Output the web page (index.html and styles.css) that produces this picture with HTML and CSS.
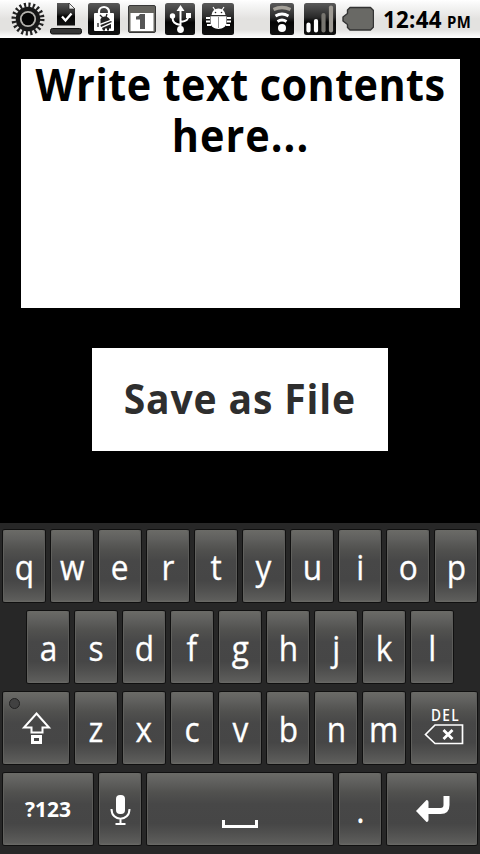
FILE: index.html
```
<!DOCTYPE html>
<html lang="en">
<head>
<meta charset="utf-8">
<title>Text editor</title>
<link rel="stylesheet" href="styles.css">
</head>
<body>
<header class="status">
  <svg class="status-icons" width="374" height="38" viewBox="0 0 374 38">
    <defs>
      <linearGradient id="tile" x2="0" y2="1"><stop offset="0" stop-color="#5a5a5a"/><stop offset=".45" stop-color="#292929"/><stop offset=".6" stop-color="#050505"/><stop offset="1" stop-color="#111"/></linearGradient>
    </defs>
    <circle cx="28" cy="19" r="14.2" fill="none" stroke="#222" stroke-width="4.6" stroke-dasharray="2.1 2.361"/>
    <circle cx="28" cy="19" r="10.2" fill="#b5b3ae" stroke="#171717" stroke-width="4.2"/>
    <circle cx="28" cy="19" r="6.3" fill="#050505"/>
    <path d="M57 3H69L75 9V25.5H57Z" fill="url(#tile)"/><path d="M69 3V9H75Z" fill="#eee" stroke="#222" stroke-width=".7"/>
    <path d="M62 16.5l3.500 4 6-7" fill="none" stroke="#fff" stroke-width="2.300"/>
    <rect x="50.500" y="28.500" width="31" height="5.500" rx="2" fill="#353535" stroke="#111"/>
    <rect x="88" y="3" width="32" height="32" rx="2.500" fill="url(#tile)"/>
    <path d="M99 15V11.500a5 4.500 0 0 1 10 0V15" fill="none" stroke="#fff" stroke-width="2.200"/>
    <rect x="94" y="13" width="20" height="18" rx="1" fill="#fff"/>
    <path d="M100.500 19q1.500-3 5-2.500t4.500 3.500l-9.500 3.500zM100.500 25l10.500-4 1 1-11 5zM102 28l9-4v4.500h-2v2h-2v-2h-2v2h-2z" fill="#222"/><path d="M100 15l3 3M107 14l-1 3M98 23v4" stroke="#222" stroke-width="1.300"/>
    <rect x="128.500" y="5.500" width="27" height="27" rx="1.500" fill="#65645f" stroke="#383838"/>
    <rect x="130.500" y="13" width="23" height="18" fill="#fff"/><path d="M140 14h5v15h-5V19.500h-4v-3q3 0 4-2.500z" fill="#555"/>
    <rect x="165" y="3" width="30" height="32" rx="2.500" fill="url(#tile)"/>
    <g fill="none" stroke="#fff" stroke-width="2"><path d="M180.500 8v21M180.500 25c-6-1-8-3-8-8M180.500 22c6-1 8-2 8-7"/></g>
    <path d="M180.500 5l4 6h-8zM186 13h5v5h-5z" fill="#fff"/><circle cx="172.500" cy="16" r="2.700" fill="#fff"/><circle cx="180.500" cy="29.500" r="3.400" fill="#fff"/>
    <rect x="202" y="3" width="32" height="32" rx="2.500" fill="url(#tile)"/>
    <path d="M213 7l2 3M224 7l-2 3" stroke="#fff" stroke-width="1.200"/>
    <path d="M211.500 15q1-6.500 7-6.500t7 6.500zM210.500 16.300h16v6.200c0 8.500-16 8.500-16 0z" fill="#fff"/>
    <path d="M206 18h4M206 21.500h4M207 25h4M227 18h4M227 21.500h4M226 25h4" stroke="#fff" stroke-width="2"/>
    <path d="M218.500 17v11" stroke="#777" stroke-width=".8"/><circle cx="215.500" cy="12.500" r=".8" fill="#222"/><circle cx="221.500" cy="12.500" r=".8" fill="#222"/>
    <rect x="270" y="3" width="24" height="32" rx="2.500" fill="url(#tile)"/>
    <path d="M273.500 9.500q8.500-4 17 0" fill="none" stroke="#a5a199" stroke-width="3.300"/>
    <g fill="none" stroke="#fff" stroke-width="2.800"><path d="M275.500 16q6.500-4 13 0"/><path d="M277.500 21.500q4.500-3 9 0"/></g><circle cx="282" cy="28" r="4" fill="#fff"/>
    <rect x="304" y="3" width="32" height="32" rx="2.500" fill="url(#tile)"/>
    <g stroke-width="4.200" stroke-linecap="round"><path d="M308.500 24.500v6M316 21v9.500" stroke="#fff"/><path d="M323.500 15v15.500" stroke="#77756f"/><path d="M331 7.500v23" stroke="#9e9a93"/></g>
    <path d="M350 7.500h20.500l3 3v16.500l-3 3h-20.500l-2.500-2.500v-3l-4.500-3.500v-4l4.500-3.500v-3.500z" fill="#696965" stroke="#333" stroke-width="1.400" stroke-linejoin="round"/>
  </svg>
  <div class="clock"><span class="time">12:44</span><span class="period">PM</span></div>
</header>
<main class="app">
  <div class="editor" contenteditable="true" spellcheck="false"><div class="line first">Write text contents</div><div class="line second">here...</div></div>
  <button class="save"><span>Save as File</span></button>
</main>
<section class="keyboard">
  <div class="row">
    <div class="key"><b>q</b></div><div class="key"><b>w</b></div><div class="key"><b>e</b></div><div class="key"><b>r</b></div><div class="key"><b>t</b></div><div class="key"><b>y</b></div><div class="key"><b>u</b></div><div class="key"><b>i</b></div><div class="key"><b>o</b></div><div class="key"><b>p</b></div>
  </div>
  <div class="row">
    <div class="key"><b>a</b></div><div class="key"><b>s</b></div><div class="key"><b>d</b></div><div class="key"><b>f</b></div><div class="key"><b>g</b></div><div class="key"><b>h</b></div><div class="key"><b>j</b></div><div class="key"><b>k</b></div><div class="key"><b>l</b></div>
  </div>
  <div class="row">
    <div class="key shift"><svg width="66" height="72" viewBox="0 0 66 72"><circle cx="11.500" cy="11.500" r="5" fill="#414141" stroke="#222"/><path d="M33.500 21.500L46 35.500H39.500V40.500H28.500V35.500H21Z" fill="none" stroke="#fff" stroke-width="2"/><path d="M29.500 44.500h8v6h-8z" fill="none" stroke="#fff" stroke-width="3"/></svg></div>
    <div class="key"><b>z</b></div><div class="key"><b>x</b></div><div class="key"><b>c</b></div><div class="key"><b>v</b></div><div class="key"><b>b</b></div><div class="key"><b>n</b></div><div class="key"><b>m</b></div>
    <div class="key del"><span>DEL</span><svg width="40" height="21" viewBox="0 0 40 21"><path d="M1.500 10.500L11 1h27.500v18.500H11Z" fill="none" stroke="#fff" stroke-width="1.700"/><path d="M19.500 6l9 9M28.500 6l-9 9" stroke="#fff" stroke-width="2.800"/></svg></div>
  </div>
  <div class="row">
    <div class="key symbols"><span>?123</span></div>
    <div class="key"><svg width="42" height="72" viewBox="0 0 42 72"><rect x="17" y="22" width="9" height="19" rx="4" fill="#fff"/><path d="M12.500 36c0 13 18 13 18 0M21.500 45v6M16.500 51h10" fill="none" stroke="#fff" stroke-width="2"/></svg></div>
    <div class="key space"><svg width="186" height="72" viewBox="0 0 186 72"><path d="M76.500 47v6.500h33V47" fill="none" stroke="#fff" stroke-width="3"/></svg></div>
    <div class="key"><b>.</b></div>
    <div class="key enter"><svg width="90" height="72" viewBox="0 0 90 72"><path d="M59.500 23v9q0 6-6 6H38" fill="none" stroke="#fff" stroke-width="6"/><path d="M29 38L39.500 27q2 0 2 2v18q0 2-2 2z" fill="#fff"/></svg></div>
  </div>
</section>
</body>
</html>
```
FILE: styles.css
```
* { box-sizing: border-box; }
body { margin: 0; width: 480px; height: 854px; display: flex; flex-direction: column; overflow: hidden; background: #000; font-family: "Open Sans", "Noto Sans", sans-serif; }
svg { display: block; flex: none; }
.status { height: 38px; flex: none; display: flex; background: linear-gradient(#fff 0, #f7f7f7 12%, #e3e2e0 50%, #e3e2e0 78%, #fafafa 96%, #fff); }
.clock { display: flex; align-items: baseline; height: 38px; padding-left: 9px; gap: 6px; line-height: 38px; font-weight: 700; white-space: nowrap; color: #000; }
.time { width: 58px; font-size: 24px; letter-spacing: .3px; transform: scaleX(.93); transform-origin: left; }
.period { font-size: 16px; letter-spacing: .4px; transform: scaleX(.93); transform-origin: left; }
.app { height: 485px; flex: none; display: flex; flex-direction: column; align-items: center; padding-top: 21px; gap: 40px; }
.editor { width: 439px; height: 249px; margin-left: 1px; background: #fff; color: #000; font-size: 44.500px; line-height: 51px; font-weight: 700; text-align: center; white-space: nowrap; outline: 0; }
.line { display: flex; justify-content: center; transform: translateY(-1px) scaleX(.93); }
.first { letter-spacing: .45px; }
.second { letter-spacing: 1.100px; }
.save { width: 296px; height: 103px; padding: 0 0 4px; border: 0; background: #fff; color: #2e2e2e; font: 700 42px "Open Sans", sans-serif; display: flex; align-items: center; justify-content: center; white-space: nowrap; }
.save span { letter-spacing: .9px; transform: scaleX(.93); }
.keyboard { height: 331px; flex: none; background: #272727; padding: 7px 3px 9px; display: flex; flex-direction: column; gap: 9px; color: #fff; }
.row { height: 72px; display: flex; justify-content: center; gap: 6px; }
.key { width: 42px; height: 72px; flex: none; display: flex; align-items: center; justify-content: center; border-radius: 2px; background: linear-gradient(#6b6b67 0, #60605e 12%, #51514f 27%, #474747 43%, #464646 70%, #50504f 83%, #5d5d5b 97%, #6b6b67); box-shadow: inset 1px 0 #60605d, inset -1px 0 #5b5b59, 0 0 0 1px #101010; }
.key b { font-weight: 400; font-size: 34px; line-height: 46px; transform: translateY(1px) scaleX(.93); -webkit-text-stroke: .3px #fff; }
.shift, .del { width: 66px; }
.symbols, .enter { width: 90px; }
.space { width: 186px; }
.del { flex-direction: column; justify-content: flex-start; padding-top: 14px; }
.del span { font-size: 15.500px; line-height: 18px; font-weight: 600; letter-spacing: 1.500px; margin-left: 2px; transform: scaleX(.88); }
.symbols span { font-size: 21px; font-weight: 700; }
```
